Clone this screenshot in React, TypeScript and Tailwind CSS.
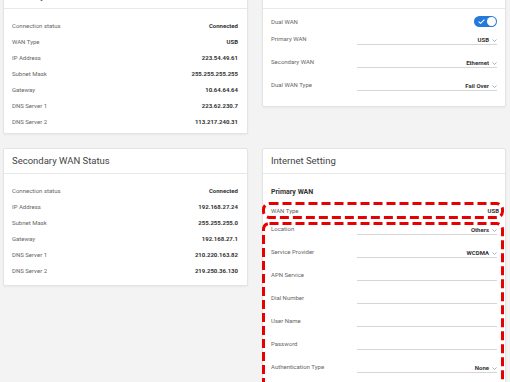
import React from "react";

const Caret = () => (
  <svg className="w-[5px] h-[3px] mb-[2px]" viewBox="0 0 5 3" fill="none" stroke="#9a9a9a" strokeWidth="0.8">
    <path d="M0.5 0.5 L2.5 2.5 L4.5 0.5" />
  </svg>
);

const Field = ({ value, caret = false }: { value?: string; caret?: boolean }) => (
  <div className="w-[140px] h-[9px] border-b border-[#d6d6d6] flex items-end justify-end gap-[3px]">
    {value && <span className="text-[6px] leading-[6px] font-bold text-[#333] pb-[1px]">{value}</span>}
    {caret && <Caret />}
  </div>
);

const FieldRow = ({ label, value, caret }: { label: string; value?: string; caret?: boolean }) => (
  <div className="flex justify-between items-start">
    <span className="text-[6px] leading-[6px] text-[#666]">{label}</span>
    <Field value={value} caret={caret} />
  </div>
);

const StatusRow = ({ label, value }: { label: string; value: string }) => (
  <div className="h-[16px] flex justify-between items-center">
    <span className="text-[6px] text-[#666]">{label}</span>
    <span className="text-[6px] font-bold text-[#333]">{value}</span>
  </div>
);

const Card = ({ title, children }: { title: string; children: React.ReactNode }) => (
  <div className="bg-white border border-[#e4e4e4] rounded-[2px] shadow-[0_1px_2px_rgba(0,0,0,0.05)]">
    <div className="h-[25px] border-b border-[#e8e8e8] px-[8px] flex items-center text-[9.5px] text-[#444]">
      {title}
    </div>
    {children}
  </div>
);

const Toggle = () => (
  <div className="w-[23px] h-[11px] rounded-full bg-[#2479db] flex items-center justify-between px-[1px]">
    <svg className="w-[7px] h-[5px] ml-[3px]" viewBox="0 0 7 5" fill="none" stroke="white" strokeWidth="1.1">
      <path d="M0.6 2.6 L2.6 4.3 L6.4 0.7" />
    </svg>
    <div className="w-[9px] h-[9px] rounded-full bg-white" />
  </div>
);

// red dashed annotation drawn over a block
const Marker = ({ w, h }: { w: number; h: number }) => (
  <svg className="absolute inset-0 pointer-events-none" width={w} height={h}>
    <rect
      x="1.5"
      y="1.5"
      width={w - 3}
      height={h - 3}
      rx="6"
      fill="none"
      stroke="#e60000"
      strokeWidth="3"
      strokeDasharray="9 4"
    />
  </svg>
);

export default function App() {
  return (
    <div className="w-[510px] h-[382px] overflow-hidden bg-[#f3f3f3]" style={{ fontFamily: "Roboto, 'Liberation Sans', sans-serif" }}>
      <div className="mt-[-17px] pl-[3px] grid grid-cols-[245px_244px] gap-x-[14px] gap-y-[14px] items-start">
        <Card title="Primary WAN Status">
          <div className="pt-[8px] pb-[4px] pl-[8px] pr-[9px]">
            <StatusRow label="Connection status" value="Connected" />
            <StatusRow label="WAN Type" value="USB" />
            <StatusRow label="IP Address" value="223.54.49.61" />
            <StatusRow label="Subnet Mask" value="255.255.255.255" />
            <StatusRow label="Gateway" value="10.64.64.64" />
            <StatusRow label="DNS Server 1" value="223.62.230.7" />
            <StatusRow label="DNS Server 2" value="113.217.240.31" />
          </div>
        </Card>

        <Card title="Dual WAN">
          <div className="pt-[7px] pb-[15px] px-[8px] flex flex-col gap-[14px]">
            <div className="h-[11px] flex justify-between items-center mb-[-5px]">
              <span className="text-[6px] text-[#666]">Dual WAN</span>
              <Toggle />
            </div>
            <FieldRow label="Primary WAN" value="USB" caret />
            <FieldRow label="Secondary WAN" value="Ethernet" caret />
            <FieldRow label="Dual WAN Type" value="Fail Over" caret />
          </div>
        </Card>

        <Card title="Secondary WAN Status">
          <div className="pt-[8px] pb-[7px] pl-[8px] pr-[9px]">
            <StatusRow label="Connection status" value="Connected" />
            <StatusRow label="IP Address" value="192.168.27.24" />
            <StatusRow label="Subnet Mask" value="255.255.255.0" />
            <StatusRow label="Gateway" value="192.168.27.1" />
            <StatusRow label="DNS Server 1" value="210.220.163.82" />
            <StatusRow label="DNS Server 2" value="219.250.36.130" />
          </div>
        </Card>

        <Card title="Internet Setting">
          <div className="pt-[15px]">
            <div className="px-[8px] text-[7px] leading-[7px] font-bold text-[#333]">Primary WAN</div>
            <div className="relative mt-[6px] ml-[-1px] mr-[1px] h-[17px] pl-[9px] pr-[5px] flex justify-between items-center">
              <span className="text-[6px] text-[#666]">WAN Type</span>
              <span className="text-[6px] font-bold text-[#333]">USB</span>
              <Marker w={242} h={17} />
            </div>
            <div className="relative mt-[3px] ml-[-1px] mr-[1px] h-[178px] pt-[4px] pl-[9px] pr-[7px] flex flex-col gap-[14px]">
              <FieldRow label="Location" value="Others" caret />
              <FieldRow label="Service Provider" value="WCDMA" caret />
              <FieldRow label="APN Service" />
              <FieldRow label="Dial Number" />
              <FieldRow label="User Name" />
              <FieldRow label="Password" />
              <FieldRow label="Authentication Type" value="None" caret />
              <Marker w={242} h={178} />
            </div>
          </div>
        </Card>
      </div>
    </div>
  );
}
